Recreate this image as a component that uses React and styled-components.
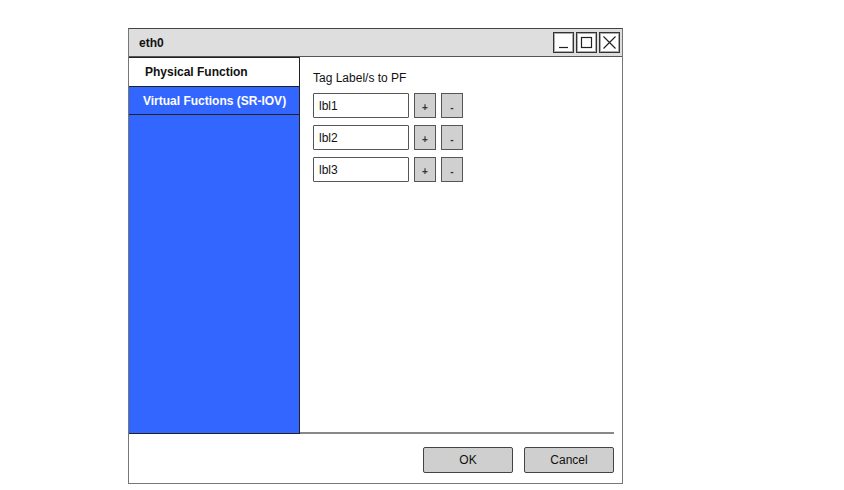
import React from "react";
import styled, { createGlobalStyle } from "styled-components";

const GlobalStyle = createGlobalStyle`
  body {
    margin: 0;
    background: #fff;
    font-family: "Liberation Sans", Arial, sans-serif;
  }
`;

const Page = styled.div`
  width: 844px;
  height: 490px;
  padding: 28px 0 0 128px;
  box-sizing: border-box;
`;

const Window = styled.div`
  width: 495px;
  height: 456px;
  box-sizing: border-box;
  border: 1.5px solid #777;
  border-top-color: #444;
  display: flex;
  flex-direction: column;
  background: #fff;
`;

const TitleBar = styled.div`
  height: 27px;
  background: #dedede;
  border-bottom: 1px solid #555;
  display: flex;
  align-items: center;
  justify-content: space-between;
  padding: 0 2px 0 10px;
  font-size: 12px;
  font-weight: bold;
  color: #111;
`;

const Controls = styled.div`
  display: flex;
  gap: 2px;
`;

const ControlBox = styled.div`
  width: 21px;
  height: 21px;
  box-sizing: border-box;
  border: 1px solid #333;
  box-shadow: inset 0 0 0 1px #aaa;
  background: #fff;
  display: flex;
  align-items: center;
  justify-content: center;
`;

const Body = styled.div`
  flex: 1;
  display: flex;
  flex-direction: column;
`;

const Main = styled.div`
  flex: 1;
  display: flex;
  margin-right: 8px;
  border-bottom: 2px solid #888;
`;

const Sidebar = styled.div`
  width: 170px;
  background: #3366ff;
  border-right: 1px solid #222;
  border-bottom: 1px solid #222;
  margin-bottom: -2px;
  display: flex;
  flex-direction: column;
`;

const Tab = styled.div`
  height: ${(p) => (p.active ? "28px" : "27px")};
  display: flex;
  align-items: center;
  padding-left: ${(p) => (p.active ? "16px" : "14px")};
  font-size: 12px;
  font-weight: bold;
  color: ${(p) => (p.active ? "#111" : "#fff")};
  background: ${(p) => (p.active ? "#fff" : "transparent")};
  border-top: ${(p) => (p.active ? "1px solid #222" : "none")};
  border-bottom: 1px solid #222;
  white-space: nowrap;
`;

const Content = styled.div`
  flex: 1;
  padding: 14px 0 0 13px;
  display: flex;
  flex-direction: column;
  gap: 7px;
`;

const Label = styled.div`
  font-size: 12px;
  line-height: 14px;
  color: #111;
  margin-bottom: 1px;
`;

const Row = styled.div`
  display: flex;
  gap: 5px;
`;

const Input = styled.div`
  width: 96px;
  height: 25px;
  box-sizing: border-box;
  border: 1.5px solid #555;
  border-radius: 1px;
  background: #fff;
  padding-left: 5px;
  display: flex;
  align-items: center;
  font-size: 12px;
  color: #111;
`;

const SmallButton = styled.div`
  width: 22px;
  height: 25px;
  box-sizing: border-box;
  border: 1.5px solid #555;
  background: #d0d0d0;
  display: flex;
  align-items: center;
  justify-content: center;
  padding-top: 4px;
  font-size: 10px;
  font-weight: bold;
  color: #333;
`;

const Footer = styled.div`
  height: 47px;
  display: flex;
  align-items: center;
  justify-content: flex-end;
  gap: 11px;
  padding: 2px 8px 0 0;
`;

const Button = styled.div`
  width: 90px;
  height: 26px;
  box-sizing: border-box;
  border: 1.5px solid #444;
  border-radius: 2px;
  background: #cfcfcf;
  display: flex;
  align-items: center;
  justify-content: center;
  font-size: 12px;
  color: #111;
`;

const labels = ["lbl1", "lbl2", "lbl3"];

const App = () => (
  <Page>
    <GlobalStyle />
    <Window>
      <TitleBar>
        <span>eth0</span>
        <Controls>
          <ControlBox>
            <svg width="15" height="15" viewBox="0 0 15 15">
              <path d="M3 12.5 H12" stroke="#222" strokeWidth="1.2" />
            </svg>
          </ControlBox>
          <ControlBox>
            <svg width="15" height="15" viewBox="0 0 15 15">
              <rect x="2.5" y="2.5" width="10" height="10" fill="none" stroke="#222" strokeWidth="1.2" />
            </svg>
          </ControlBox>
          <ControlBox>
            <svg width="15" height="15" viewBox="0 0 15 15">
              <path d="M1.5 1.5 L13.5 13.5 M13.5 1.5 L1.5 13.5" stroke="#222" strokeWidth="1.2" />
            </svg>
          </ControlBox>
        </Controls>
      </TitleBar>
      <Body>
        <Main>
          <Sidebar>
            <Tab active>Physical Function</Tab>
            <Tab>Virtual Fuctions (SR-IOV)</Tab>
          </Sidebar>
          <Content>
            <Label>Tag Label/s to PF</Label>
            {labels.map((l) => (
              <Row key={l}>
                <Input>{l}</Input>
                <SmallButton>+</SmallButton>
                <SmallButton>-</SmallButton>
              </Row>
            ))}
          </Content>
        </Main>
        <Footer>
          <Button>OK</Button>
          <Button>Cancel</Button>
        </Footer>
      </Body>
    </Window>
  </Page>
);

export default App;
